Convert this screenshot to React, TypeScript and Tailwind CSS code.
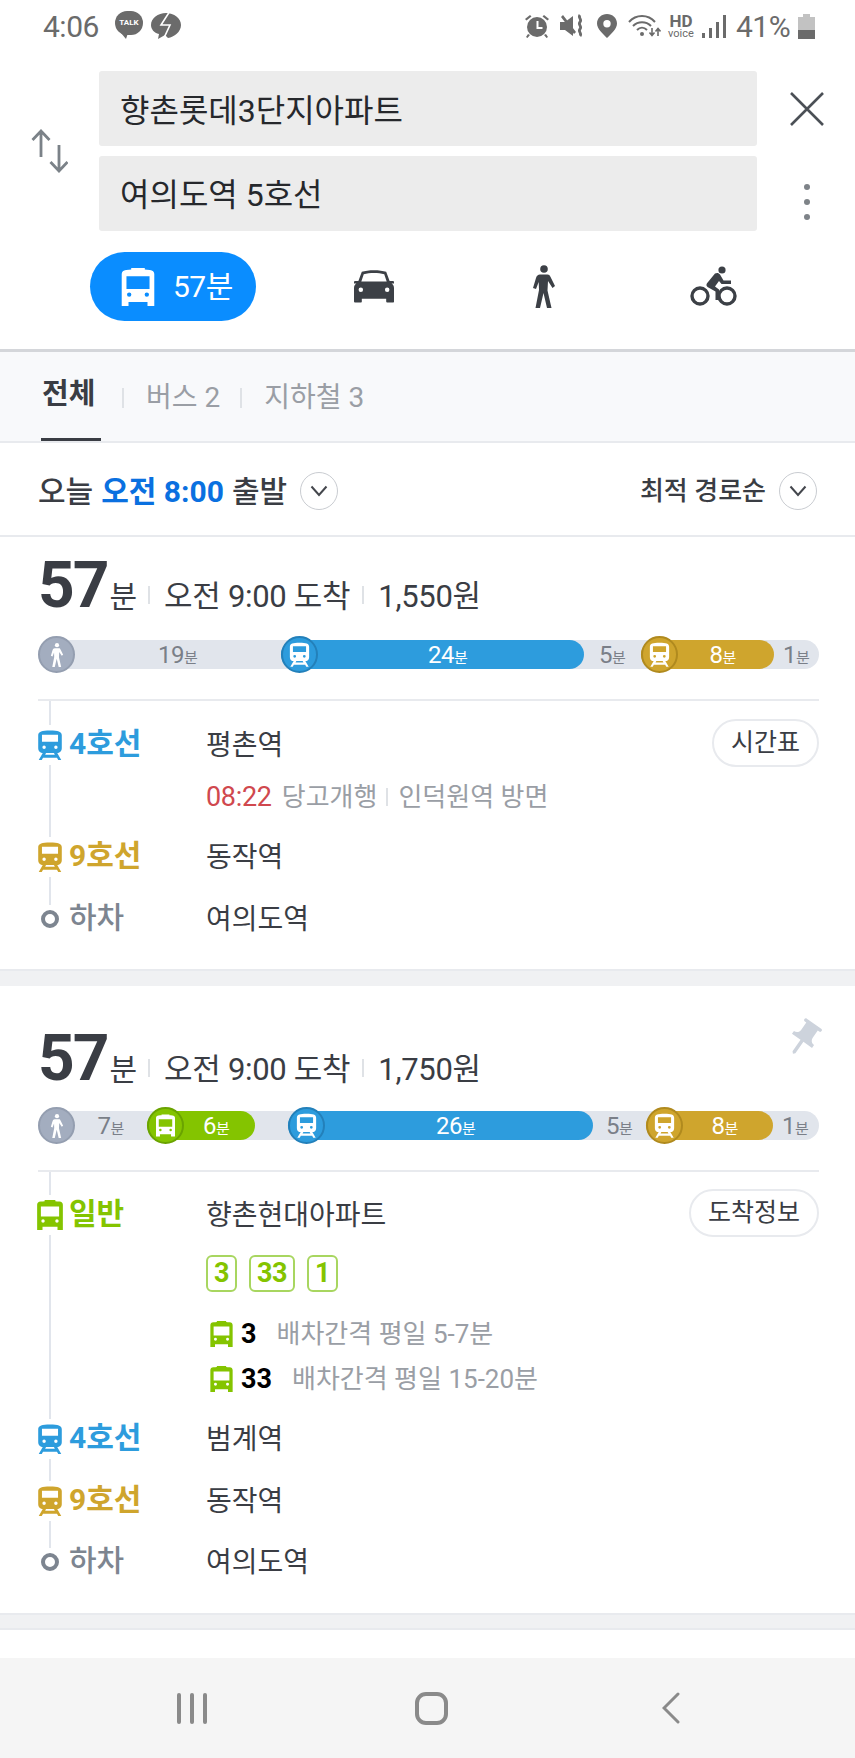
import { ReactNode } from "react";

function BusIcon({ className }: { className?: string }) {
    return (
        <svg viewBox="0 0 24 28" className={className} fill="currentColor">
            <path
                fillRule="evenodd"
                d="M0 4.500C0 2.500 1.200 1.600 3.200 1.400 4.600 1.300 6 1.200 7 1.100V0h10v1.100c1 .1 2.400.2 3.800.3C22.800 1.600 24 2.500 24 4.500V28h-5v-3H5v3H0V4.500zM3.500 6v9.500h17V6h-17zM5.500 18a1.600 1.600 0 100 3.200 1.600 1.600 0 000-3.200zM18.500 18a1.600 1.600 0 100 3.200 1.600 1.600 0 000-3.200z"
            />
        </svg>
    );
}

function TrainIcon({ className }: { className?: string }) {
    return (
        <svg viewBox="0 0 24 28" className={className} fill="currentColor">
            <path
                fillRule="evenodd"
                d="M1 5C1 1.500 4.500 .5 12 .5S23 1.500 23 5v12c0 2.800-2 4.500-4.500 4.500h-13C3 21.500 1 19.800 1 17V5zM4.500 4.500V11h15V4.500h-15zM6.500 14.500a1.600 1.600 0 100 3.200 1.600 1.600 0 000-3.200zM17.500 14.500a1.600 1.600 0 100 3.200 1.600 1.600 0 000-3.200z"
            />
            <path d="M5.500 21h3l-1 2h9l-1-2h3l4 7h-2.800l-1.200-2.200H5.500L4.300 28H1.500l4-7z" />
        </svg>
    );
}

function WalkIcon({ className }: { className?: string }) {
    return (
        <svg viewBox="0 0 24 43" className={className} fill="currentColor">
            <circle cx="12" cy="4" r="3.800" />
            <path d="M8 9.500h7.500c1.500 0 2.300.8 2.800 2L23 21l-2.500 2-4.500-7-.5 9.500L19.500 43H15l-3.500-15L8 43H3.500L7 25l-.3-8-2.700 7L1 23l3-10c.6-2 2-3.500 4-3.500z" />
        </svg>
    );
}

function CarIcon({ className }: { className?: string }) {
    return (
        <svg viewBox="0 0 41 34" className={className} fill="currentColor">
            <path
                fillRule="evenodd"
                d="M8 2.500C14 .3 27 .3 33 2.500L36.500 12H40c.6 0 1 .4 1 1v1.500h-2.500c1.500 1 2.500 2.500 2.500 4.500V33c0 .6-.4 1-1 1h-6c-.6 0-1-.4-1-1v-3H8v3c0 .6-.4 1-1 1H1c-.6 0-1-.4-1-1V19c0-2 1-3.500 2.500-4.500H0V13c0-.6.4-1 1-1h3.500L8 2.500zM10 5L7.500 12.500h26L31 5C25 3.300 16 3.300 10 5zM7 18.500a2.300 2.300 0 100 4.600 2.300 2.300 0 000-4.600zM34 18.500a2.300 2.300 0 100 4.600 2.300 2.300 0 000-4.600z"
            />
        </svg>
    );
}

function BikeIcon({ className }: { className?: string }) {
    return (
        <svg viewBox="0 0 47 40" className={className} fill="currentColor">
            <circle cx="32" cy="4" r="3.600" />
            <circle cx="10" cy="30" r="8" fill="none" stroke="currentColor" strokeWidth="3.400" />
            <circle cx="37" cy="30" r="8" fill="none" stroke="currentColor" strokeWidth="3.400" />
            <path d="M25 7.500c2-1 4-.5 5 1l3.500 6H41v3.500h-9.500L29 15l-4 5.500 4 3V34h-3.500v-8.500L17.500 21c-1.300-1-1.300-2.500-.5-3.700L25 7.500z" />
        </svg>
    );
}

function Divider({ className }: { className: string }) {
    return <span className={`w-[2px] bg-[#dfe2e6] shrink-0 ${className}`} />;
}

function Chevron({ className }: { className?: string }) {
    return (
        <span
            className={`w-[38px] h-[38px] rounded-full border border-[#c9ccd1] bg-white flex items-center justify-center shrink-0 ${className ?? ""}`}
        >
            <svg viewBox="0 0 18 12" className="w-[18px] h-[12px]" fill="none" stroke="#44474d" strokeWidth="2">
                <path d="M1.500 1.500L9 10l7.500-8.500" />
            </svg>
        </span>
    );
}

function StatusBar() {
    return (
        <div className="h-[52px] flex items-center justify-between pl-[43px] pr-[40px] text-[#6b6b6b]">
            <div className="flex items-center">
                <span className="text-[30px] w-[72px] tracking-[-0.5px]">4:06</span>
                <span className="relative w-[28px] h-[30px]">
                    <span className="absolute left-0 top-0 w-[28px] h-[24px] rounded-full bg-[#6b6b6b] flex items-center justify-center text-[8px] font-bold text-white leading-none">
                        TALK
                    </span>
                    <span className="absolute left-[6px] top-[22px] w-0 h-0 border-l-[5px] border-r-[2px] border-t-[6px] border-l-transparent border-r-transparent border-t-[#6b6b6b]" />
                </span>
                <svg viewBox="0 0 30 28" className="w-[30px] h-[28px] ml-[8px]">
                    <path d="M15 1C7 1 0 6 0 13c0 4 3 8 8 9l-1 5 7-4 3 3c6-1 13-6 13-13S23 1 15 1z" fill="#6b6b6b" />
                    <path d="M19 -1L10 13h9L12 28" fill="none" stroke="#fff" strokeWidth="1.600" />
                </svg>
            </div>
            <div className="flex items-center">
                <svg viewBox="0 0 26 24" className="w-[26px] h-[24px]" fill="currentColor">
                    <circle cx="13" cy="13" r="10" />
                    <path d="M12.500 7h2v6h4v2h-6z" fill="#fff" />
                    <path d="M1 5l5-4 1.500 1.500-5 4zM25 5l-5-4-1.500 1.500 5 4zM4 20l-2 3 1.500 1 2.500-3zM22 20l2 3-1.500 1-2.500-3z" />
                </svg>
                <svg viewBox="0 0 25 24" className="w-[25px] h-[24px] ml-[10px]" fill="currentColor">
                    <path d="M0 8h5l8-6v20l-8-6H0zM1 3l2-2 13 17-2 2z" />
                    <path d="M20 1c-2.500 3 2.500 4 0 7s2.500 4 0 7 2.500 4 0 7" fill="none" stroke="currentColor" strokeWidth="2.800" />
                </svg>
                <svg viewBox="0 0 20 24" className="w-[20px] h-[24px] ml-[12px]" fill="currentColor">
                    <path
                        fillRule="evenodd"
                        d="M10 0c5.500 0 10 4 10 9.500C20 15 14 20 10 24 6 20 0 15 0 9.500 0 4 4.500 0 10 0zm0 6a3.700 3.700 0 100 7.400A3.700 3.700 0 0010 6z"
                    />
                </svg>
                <svg viewBox="0 0 33 24" className="w-[33px] h-[24px] ml-[11px]" fill="none" stroke="currentColor" strokeWidth="2">
                    <path d="M1 8c7-8 19-8 26 0M5 12c5-5 13-5 18 0M9 16c3-3 7-3 10 0" />
                    <circle cx="14" cy="20" r="2" fill="currentColor" stroke="none" />
                    <path d="M24 14v7M21.500 18.500l2.500 3 2.500-3M30 22v-7M27.500 17.500l2.500-3 2.500 3" strokeWidth="1.600" />
                </svg>
                <span className="flex flex-col items-center w-[26px] ml-[7px] leading-none font-bold">
                    <span className="text-[17px] leading-[15px]">HD</span>
                    <span className="text-[11px] leading-[10px] font-normal">voice</span>
                </span>
                <span className="flex items-end gap-[4px] h-[24px] ml-[8px]">
                    <span className="w-[3px] h-[5px] bg-[#6b6b6b]" />
                    <span className="w-[3px] h-[10px] bg-[#6b6b6b]" />
                    <span className="w-[3px] h-[16px] bg-[#6b6b6b]" />
                    <span className="w-[3px] h-[23px] bg-[#6b6b6b]" />
                </span>
                <span className="text-[30px] ml-[10px] w-[58px] tracking-[-0.5px]">41%</span>
                <svg viewBox="0 0 17 25" className="w-[17px] h-[25px] ml-[4px]">
                    <path d="M5 0h7v3h5v22H0V3h5z" fill="#c2c2c2" />
                    <rect y="16" width="17" height="9" fill="#6b6b6b" />
                </svg>
            </div>
        </div>
    );
}

function Header() {
    return (
        <div className="h-[352px] border-b-[3px] border-[#d4d6da] bg-white">
            <StatusBar />
            <div className="flex mt-[19px] pl-[31px]">
                <div className="w-[68px] flex items-center">
                    <svg viewBox="0 0 37 44" className="w-[37px] h-[44px]" fill="none" stroke="#7b8288" strokeWidth="2.800">
                        <path d="M10 28V2M1.500 11L10 2l8.500 9M28 16v26M19.500 33l8.500 9 8.500-9" />
                    </svg>
                </div>
                <div className="w-[658px] flex flex-col gap-[10px]">
                    <div className="h-[75px] bg-[#ececec] rounded-[3px] flex items-center pl-[21px] pt-[5px] text-[32px] text-[#26282c]">
                        향촌롯데3단지아파트
                    </div>
                    <div className="h-[75px] bg-[#ececec] rounded-[3px] flex items-center pl-[21px] pt-[3px] text-[32px] text-[#26282c]">
                        여의도역 5호선
                    </div>
                </div>
                <div className="flex-1 flex flex-col items-center pl-[2px]">
                    <svg viewBox="0 0 34 34" className="w-[34px] h-[34px] mt-[21px]" fill="none" stroke="#4b5056" strokeWidth="2.600">
                        <path d="M1 1l32 32M33 1L1 33" />
                    </svg>
                    <div className="flex flex-col gap-[9px] mt-[58px]">
                        <span className="w-[6px] h-[6px] rounded-full bg-[#7e8388]" />
                        <span className="w-[6px] h-[6px] rounded-full bg-[#7e8388]" />
                        <span className="w-[6px] h-[6px] rounded-full bg-[#7e8388]" />
                    </div>
                </div>
            </div>
            <div className="flex items-center mt-[21px] ml-[90px] h-[69px] text-[#3c4046]">
                <div className="w-[166px] h-[69px] rounded-full bg-[#0a8dff] flex items-center text-white pl-[30px]">
                    <BusIcon className="w-[36px] h-[38px]" />
                    <span className="text-[30px] ml-[17px] tracking-[-0.5px]">57분</span>
                </div>
                <CarIcon className="w-[40px] h-[34px] ml-[98px] -mt-[2px]" />
                <WalkIcon className="w-[24px] h-[43px] ml-[138px]" />
                <BikeIcon className="w-[47px] h-[40px] ml-[134px] -mt-[2px]" />
            </div>
        </div>
    );
}

function Tabs() {
    return (
        <div className="h-[91px] bg-[#f8f9fb] border-b-2 border-[#e8eaee] flex items-center pl-[41px] text-[28px]">
            <div className="relative h-[89px] w-[60px] border-b-[3px] border-[#3a3d44] flex items-center pl-[1px] text-[29px] font-bold text-[#3a3d44]">
                전체
            </div>
            <Divider className="h-[20px] ml-[21px] mt-[2px]" />
            <span className="ml-[22px] mt-[2px] text-[#9a9ea5]">버스 2</span>
            <Divider className="h-[20px] ml-[20px] mt-[2px]" />
            <span className="ml-[22px] mt-[2px] text-[#9a9ea5]">지하철 3</span>
        </div>
    );
}

function FilterRow() {
    return (
        <div className="h-[94px] pt-[4px] border-b-2 border-[#e8eaee] flex items-center justify-between pl-[38px] pr-[38px] bg-white">
            <div className="flex items-center text-[30px] font-medium text-[#3a3d44]">
                <span>오늘</span>
                <span className="ml-[8px] text-[#0a70e0] font-bold">오전 8:00</span>
                <span className="ml-[8px]">출발</span>
                <Chevron className="ml-[13px]" />
            </div>
            <div className="flex items-center text-[26px] font-medium text-[#3a3d44]">
                <span>최적 경로순</span>
                <Chevron className="ml-[13px]" />
            </div>
        </div>
    );
}

function Minutes({ value, light }: { value: string; light?: boolean }) {
    return (
        <span className={`flex items-baseline leading-none ${light ? "text-white" : "text-[#7a7f88]"}`}>
            <span className="text-[24px] tracking-[-0.5px]">{value}</span>
            <span className="text-[15px]">분</span>
        </span>
    );
}

function BarCircle({ kind, className }: { kind: "walk" | "bus" | "train"; className: string }) {
    return (
        <span
            className={`w-[37px] h-[37px] -my-[4px] rounded-full border-2 flex items-center justify-center text-white shrink-0 ${className}`}
        >
            {kind === "walk" && <WalkIcon className="w-[14px] h-[24px]" />}
            {kind === "bus" && <BusIcon className="w-[19px] h-[23px]" />}
            {kind === "train" && <TrainIcon className="w-[21px] h-[25px]" />}
        </span>
    );
}

function Segment({
    kind,
    value,
    className,
    circle,
}: {
    kind: "bus" | "train";
    value: string;
    className: string;
    circle: string;
}) {
    return (
        <div className={`h-[29px] rounded-full flex items-center shrink-0 ${className}`}>
            <BarCircle kind={kind} className={circle} />
            <div className="flex-1 flex justify-center pr-[6px]">
                <Minutes value={value} light />
            </div>
        </div>
    );
}

function Gap({ value, className }: { value?: string; className: string }) {
    return <div className={`flex justify-center shrink-0 ${className}`}>{value && <Minutes value={value} />}</div>;
}

function TimeBar({ children }: { children: ReactNode }) {
    return <div className="h-[29px] my-[4px] rounded-full bg-[#e1e5ec] flex items-center">{children}</div>;
}

function Summary({ fare }: { fare: string }) {
    return (
        <div className="h-[70px] flex items-baseline text-[#3a3d44]">
            <span className="text-[64px] font-bold leading-[70px] tracking-[-2px]">57</span>
            <span className="text-[30px] ml-[2px]">분</span>
            <Divider className="h-[18px] ml-[11px] self-end mb-[17px]" />
            <span className="text-[31px] ml-[14px] tracking-[-0.3px]">오전 9:00 도착</span>
            <Divider className="h-[18px] ml-[12px] self-end mb-[17px]" />
            <span className="text-[31px] ml-[14px] tracking-[-0.3px]">{fare}</span>
        </div>
    );
}

function Row({
    icon,
    label,
    color,
    station,
    action,
    className,
}: {
    icon: ReactNode;
    label: string;
    color: string;
    station: string;
    action?: string;
    className?: string;
}) {
    return (
        <div className={`relative h-[50px] flex items-center ${className ?? ""}`}>
            <div className="w-[24px] py-[5px] bg-white flex justify-center shrink-0">{icon}</div>
            <span className={`text-[30px] font-bold ml-[7px] w-[137px] -mt-[3px] ${color}`}>{label}</span>
            <span className="text-[28px] mt-[2px] text-[#3a3d44]">{station}</span>
            {action && (
                <span className="ml-auto -mt-[4px] h-[48px] px-[17px] rounded-full border-2 border-[#e8eaee] bg-white flex items-center text-[25px] text-[#3a3d44]">
                    {action}
                </span>
            )}
        </div>
    );
}

function Ring() {
    return <span className="w-[18px] h-[18px] rounded-full border-[4px] border-[#7d8590] bg-white" />;
}

const train4 = <TrainIcon className="w-[26px] h-[30px] -mx-[1px] shrink-0 text-[#2d9cdd]" />;
const train9 = <TrainIcon className="w-[26px] h-[30px] -mx-[1px] shrink-0 text-[#cfa52d]" />;

function FirstCard() {
    return (
        <div className="bg-white pl-[38px] pr-[36px] pt-[14px] pb-[25px] border-b-2 border-[#e8eaee]">
            <Summary fare="1,550원" />
            <div className="mt-[19px]">
                <TimeBar>
                    <BarCircle kind="walk" className="bg-[#a3adbf] border-[#949eb0]" />
                    <Gap value="19" className="w-[206px]" />
                    <Segment kind="train" value="24" className="w-[303px] bg-[#2d9cdd]" circle="bg-[#2d9cdd] border-[#2380ba]" />
                    <Gap value="5" className="w-[57px]" />
                    <Segment kind="train" value="8" className="w-[133px] bg-[#cfa52d]" circle="bg-[#cfa52d] border-[#b08a1e]" />
                    <Gap value="1" className="w-[45px]" />
                </TimeBar>
            </div>
            <div className="relative mt-[30px] border-t-2 border-[#e8eaee] pt-[19px]">
                <span className="absolute left-[11px] top-0 bottom-[24px] w-[2px] bg-[#e1e5ec]" />
                <Row icon={train4} label="4호선" color="text-[#2d9cdd]" station="평촌역" action="시간표" />
                <div className="relative h-[30px] mt-[12px] pl-[168px] flex items-center text-[26px] text-[#9a9ea5]">
                    <span className="text-[#d0484e] text-[27px] tracking-[-0.3px]">08:22</span>
                    <span className="ml-[10px]">당고개행</span>
                    <Divider className="h-[18px] ml-[9px]" />
                    <span className="ml-[10px]">인덕원역 방면</span>
                </div>
                <Row icon={train9} label="9호선" color="text-[#cfa52d]" station="동작역" className="mt-[20px]" />
                <Row icon={<Ring />} label="하차" color="text-[#7d8590] !font-medium" station="여의도역" className="mt-[12px]" />
            </div>
        </div>
    );
}

function BusInterval({ no, text, className }: { no: string; text: string; className?: string }) {
    return (
        <div className={`relative h-[30px] flex items-center pl-[172px] ${className ?? ""}`}>
            <BusIcon className="w-[23px] h-[26px] text-[#84c400] shrink-0" />
            <span className="ml-[8px] text-[27px] font-bold text-black">{no}</span>
            <span className="ml-[20px] text-[26px] text-[#9a9ea5]">{text}</span>
        </div>
    );
}

function SecondCard() {
    return (
        <div className="relative bg-white pl-[38px] pr-[36px] pt-[38px] pb-[26px] border-b-2 border-[#e8eaee]">
            <svg viewBox="0 0 24 24" className="absolute right-[30px] top-[30px] w-[42px] h-[44px] rotate-[35deg]" fill="#cdd3dc">
                <path d="M16 9V4h1c.6 0 1-.4 1-1s-.4-1-1-1H7c-.6 0-1 .4-1 1s.4 1 1 1h1v5c0 1.700-1.300 3-3 3v2h6v8l1 1 1-1v-8h6v-2c-1.700 0-3-1.300-3-3z" />
            </svg>
            <Summary fare="1,750원" />
            <div className="mt-[17px]">
                <TimeBar>
                    <BarCircle kind="walk" className="bg-[#a3adbf] border-[#949eb0]" />
                    <Gap value="7" className="w-[72px]" />
                    <Segment kind="bus" value="6" className="w-[108px] bg-[#84c400]" circle="bg-[#84c400] border-[#6aa300]" />
                    <Gap className="w-[33px]" />
                    <Segment kind="train" value="26" className="w-[305px] bg-[#2d9cdd]" circle="bg-[#2d9cdd] border-[#2380ba]" />
                    <Gap value="5" className="w-[53px]" />
                    <Segment kind="train" value="8" className="w-[127px] bg-[#cfa52d]" circle="bg-[#cfa52d] border-[#b08a1e]" />
                    <Gap value="1" className="w-[45px]" />
                </TimeBar>
            </div>
            <div className="relative mt-[30px] border-t-2 border-[#e8eaee] pt-[18px]">
                <span className="absolute left-[11px] top-0 bottom-[24px] w-[2px] bg-[#e1e5ec]" />
                <Row
                    icon={<BusIcon className="w-[26px] h-[30px] -mx-[1px] shrink-0 text-[#84c400]" />}
                    label="일반"
                    color="text-[#84c400]"
                    station="향촌현대아파트"
                    action="도착정보"
                />
                <div className="relative mt-[15px] pl-[168px] flex gap-[12px] text-[27px] font-bold text-[#84c400]">
                    {["3", "33", "1"].map((no) => (
                        <span
                            key={no}
                            className="h-[37px] px-[6px] min-w-[31px] rounded-[6px] border-2 border-[#a8d660] flex items-center justify-center tracking-[-0.5px]"
                        >
                            {no}
                        </span>
                    ))}
                </div>
                <BusInterval no="3" text="배차간격 평일 5-7분" className="mt-[27px]" />
                <BusInterval no="33" text="배차간격 평일 15-20분" className="mt-[15px]" />
                <Row icon={train4} label="4호선" color="text-[#2d9cdd]" station="범계역" className="mt-[20px]" />
                <Row icon={train9} label="9호선" color="text-[#cfa52d]" station="동작역" className="mt-[12px]" />
                <Row icon={<Ring />} label="하차" color="text-[#7d8590] !font-medium" station="여의도역" className="mt-[11px]" />
            </div>
        </div>
    );
}

function NavBar() {
    return (
        <div className="mt-auto h-[100px] bg-[#f5f5f5] flex items-center relative shrink-0">
            <div className="flex items-center pl-[177px] gap-[9px]">
                <span className="w-[4px] h-[31px] rounded-full bg-[#8a8a8a]" />
                <span className="w-[4px] h-[31px] rounded-full bg-[#8a8a8a]" />
                <span className="w-[4px] h-[31px] rounded-full bg-[#8a8a8a]" />
            </div>
            <span className="ml-[208px] w-[33px] h-[33px] rounded-[11px] border-[4px] border-[#8a8a8a]" />
            <svg viewBox="0 0 18 32" className="ml-[214px] w-[18px] h-[32px]" fill="none" stroke="#8a8a8a" strokeWidth="3" strokeLinecap="round">
                <path d="M16 2L2 16l14 14" />
            </svg>
        </div>
    );
}

export default function App() {
    return (
        <div className="w-[855px] h-[1758px] flex flex-col overflow-hidden bg-white font-[Roboto,'Noto_Sans_CJK_KR',sans-serif]">
            <Header />
            <Tabs />
            <FilterRow />
            <FirstCard />
            <div className="h-[15px] bg-[#f0f1f3] shrink-0" />
            <SecondCard />
            <div className="h-[15px] bg-[#f0f1f3] border-b-2 border-[#e8eaee] shrink-0" />
            <NavBar />
        </div>
    );
}
